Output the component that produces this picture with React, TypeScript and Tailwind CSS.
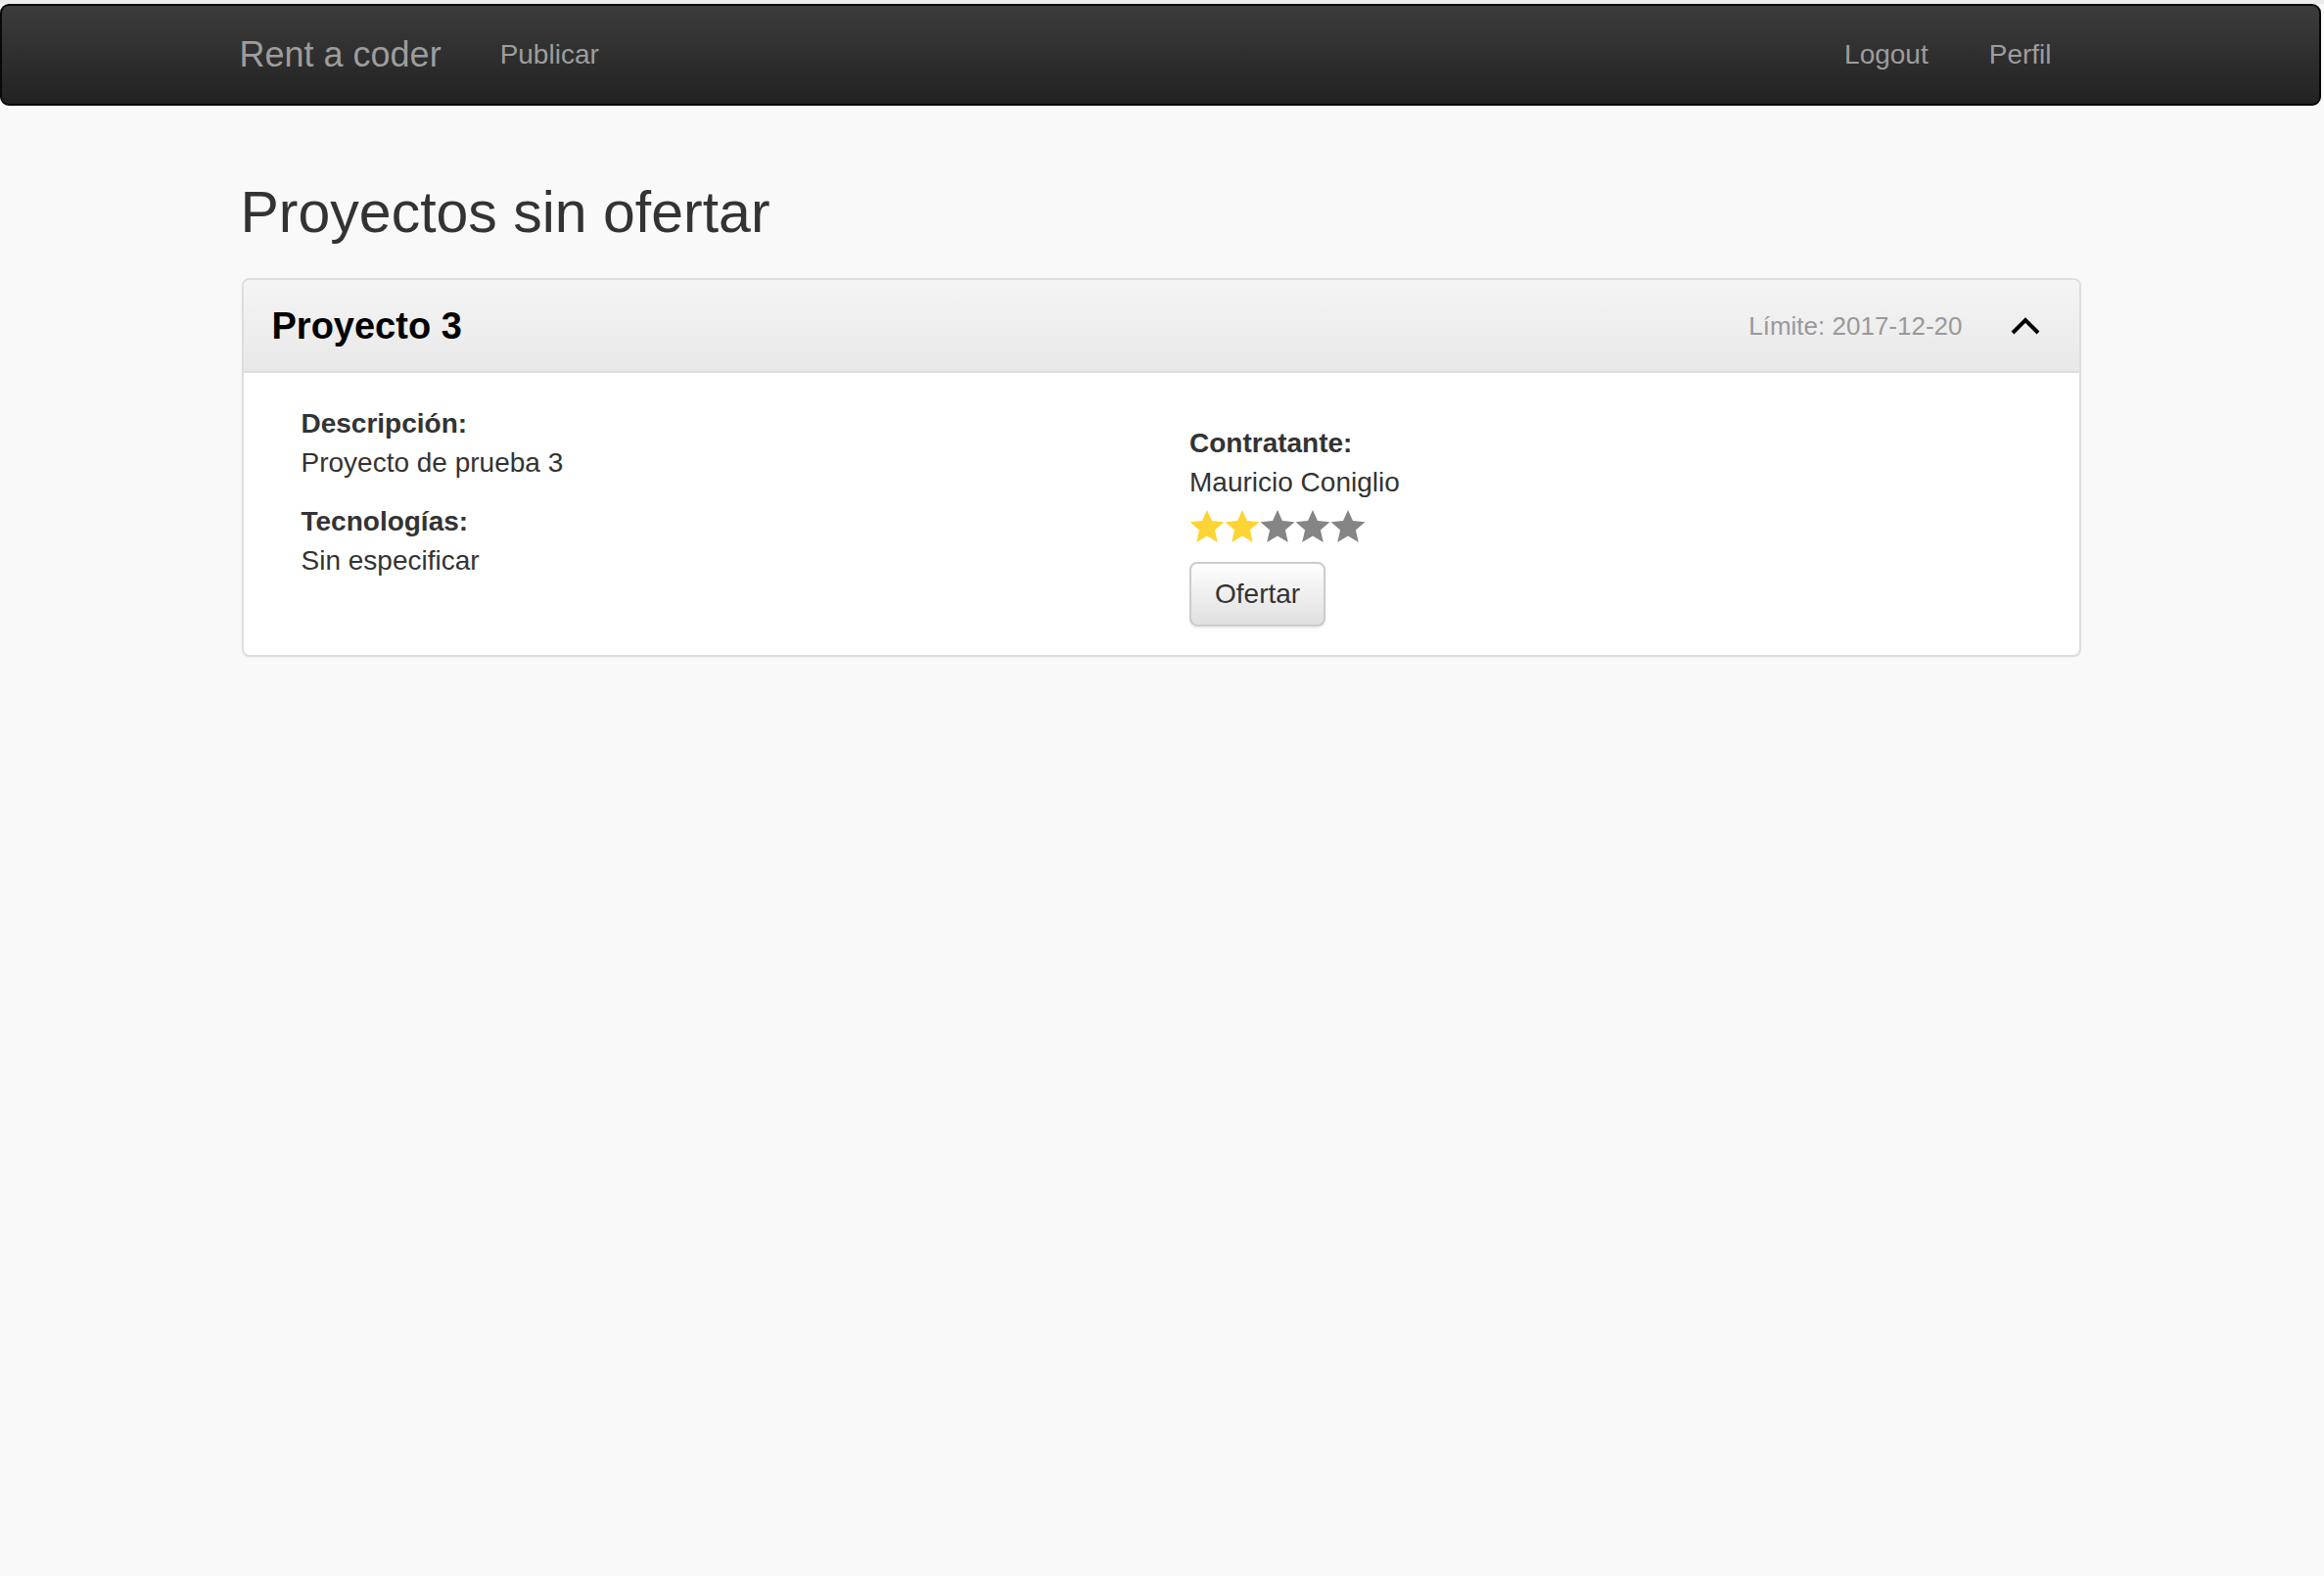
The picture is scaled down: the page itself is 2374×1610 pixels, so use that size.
import React from "react";

const Star = ({ on }: { on: boolean }) => (
  <svg width="36" height="36" viewBox="0 0 24 24" className="block">
    <polygon
      points="12,0.6 15.3,8 23.6,8.8 17.3,14.3 19.2,22.6 12,18.3 4.8,22.6 6.7,14.3 0.4,8.8 8.7,8"
      fill={on ? "#fdd433" : "#858585"}
    />
  </svg>
);

export default function App() {
  const rating = 2;
  return (
    <div className="min-h-screen bg-[#f9f9f9] font-['Liberation_Sans',Arial,sans-serif] text-[#333]">
      <div className="h-[4px] bg-[#ebebeb]" />
      <div className="pr-[3px]">
        {/* navbar */}
        <div className="h-[104px] rounded-[9px] border-2 border-[#080808] bg-linear-to-b from-[#3c3c3c] to-[#222222]">
          <div className="mx-auto flex h-full w-[1880px] items-center text-[#9d9d9d]">
            <span className="-ml-[1px] text-[36px] leading-none">Rent a coder</span>
            <span className="ml-[60px] text-[28px] leading-none">Publicar</span>
            <div className="ml-auto mr-[30px] flex gap-[62px] text-[28px] leading-none">
              <span>Logout</span>
              <span>Perfil</span>
            </div>
          </div>
        </div>

        <div className="mx-auto w-[1880px]">
          <h2 className="mt-[77px] mb-[35px] text-[59px] leading-[64px] font-normal text-[#333]">
            Proyectos sin ofertar
          </h2>

          {/* panel */}
          <div className="ml-[1px] rounded-[8px] border-2 border-[#dddddd] bg-white shadow-[0_1px_2px_rgba(0,0,0,0.05)]">
            <div className="flex h-[95px] items-center rounded-t-[6px] border-b-2 border-[#dddddd] bg-linear-to-b from-[#f5f5f5] to-[#e8e8e8] pl-[29px] pr-[39px]">
              <span className="pt-[2px] text-[38px] font-bold text-black">Proyecto 3</span>
              <span className="ml-auto pt-[2px] text-[26px] text-[#999]">Límite: 2017-12-20</span>
              <svg width="32" height="20" viewBox="0 0 32 20" className="ml-[48px]">
                <polyline points="3,17 16,4 29,17" fill="none" stroke="#000" strokeWidth="4" />
              </svg>
            </div>

            <div className="grid grid-cols-2 px-[30px] pt-[32px] pb-[29px] text-[28px] leading-[40px]">
              <div className="pl-[29px]">
                <div className="font-bold">Descripción:</div>
                <div>Proyecto de prueba 3</div>
                <div className="mt-[20px] font-bold">Tecnologías:</div>
                <div>Sin especificar</div>
              </div>
              <div className="pl-[29px] pt-[20px]">
                <div className="font-bold">Contratante:</div>
                <div>Mauricio Coniglio</div>
                <div className="flex h-[44px] pt-[7px]">
                  {[1, 2, 3, 4, 5].map((i) => (
                    <Star key={i} on={i <= rating} />
                  ))}
                </div>
                <button className="mt-[17px] h-[66px] rounded-[8px] border-2 border-[#cccccc] bg-linear-to-b from-white to-[#e0e0e0] px-[24px] text-[28px] leading-[40px] text-[#333] shadow-[0_2px_2px_rgba(0,0,0,0.075)]">
                  Ofertar
                </button>
              </div>
            </div>
          </div>
        </div>
      </div>
    </div>
  );
}
